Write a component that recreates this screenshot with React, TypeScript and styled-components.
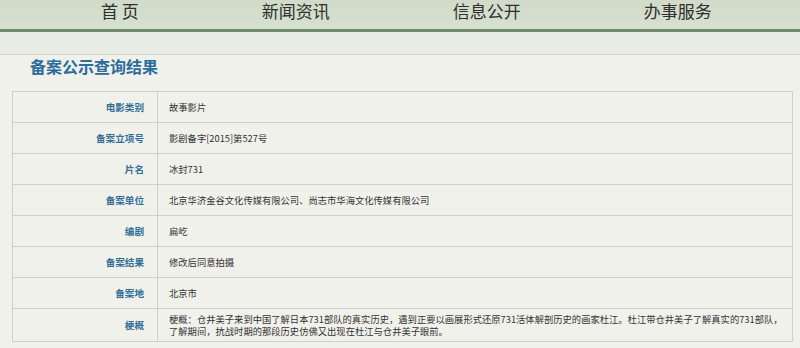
import styled, { createGlobalStyle } from "styled-components"

interface IRecord {
  label: string
  value: string
  tall?: boolean
}

const records: IRecord[] = [
  { label: "电影类别", value: "故事影片" },
  { label: "备案立项号", value: "影剧备字[2015]第527号" },
  { label: "片名", value: "冰封731" },
  {
    label: "备案单位",
    value: "北京华济金谷文化传媒有限公司、尚志市华海文化传媒有限公司",
  },
  { label: "编剧", value: "扁屹" },
  { label: "备案结果", value: "修改后同意拍摄" },
  { label: "备案地", value: "北京市" },
  {
    label: "梗概",
    value:
      "梗概：仓井美子来到中国了解日本731部队的真实历史，遇到正要以画展形式还原731活体解剖历史的画家杜江。杜江带仓井美子了解真实的731部队，了解期间，抗战时期的那段历史仿佛又出现在杜江与仓井美子眼前。",
    tall: true,
  },
]

const navItems = ["首 页", "新闻资讯", "信息公开", "办事服务"]

const GlobalStyle = createGlobalStyle`
  html, body {
    margin: 0;
    padding: 0;
    background: #eceee7;
  }
  body {
    font-family: "Noto Sans CJK SC", "Noto Sans", sans-serif;
  }
  #root {
    width: 800px;
    height: 348px;
    overflow: hidden;
  }
`

const Page = styled.div`
  width: 800px;
  height: 348px;
  display: flex;
  flex-direction: column;
`

const Nav = styled.nav`
  height: 29px;
  display: flex;
  align-items: flex-start;
  gap: 123px;
  padding-left: 101px;
  background: linear-gradient(to bottom, #d1dbc9, #d8e1d1);
  border-bottom: 3px solid #6e8a6b;
`

const NavItem = styled.a`
  font-size: 17px;
  line-height: 17px;
  padding-top: 2px;
  color: #2f2f2f;
  text-decoration: none;
  white-space: pre;
`

const Band = styled.div`
  height: 22px;
  background: #e9ece5;
  border-bottom: 1px solid #d2d5cd;
`

const Panel = styled.section`
  flex: 1;
  padding: 0 7px 0 12px;
  background: #f1f1ec;
`

const Title = styled.h2`
  margin: 0 0 17px;
  padding: 3px 0 0 18px;
  font-size: 16px;
  line-height: 16px;
  font-weight: 700;
  color: #2a6c9a;
`

const Table = styled.table`
  width: 100%;
  border-collapse: collapse;
  border: 1px solid #cfd1c9;
  font-size: 9.3px;
`

const Row = styled.tr<{ $tall?: boolean }>`
  height: ${p => (p.$tall ? 33 : 31)}px;
`

const Label = styled.th`
  width: 131px;
  padding: 0 13px 0 0;
  border: 1px solid #cfd1c9;
  text-align: right;
  font-size: 9.6px;
  font-weight: 700;
  color: #336f97;
`

const Value = styled.td<{ $tall?: boolean }>`
  padding: ${p => (p.$tall ? "4px 1px 4px 11px" : "0 1px 0 11px")};
  border: 1px solid #cfd1c9;
  color: #333;
  line-height: ${p => (p.$tall ? "12px" : "normal")};
`

export default function App() {
  return (
    <Page>
      <GlobalStyle />
      <Nav>
        {navItems.map(item => (
          <NavItem key={item} href="#">
            {item}
          </NavItem>
        ))}
      </Nav>
      <Band />
      <Panel>
        <Title>备案公示查询结果</Title>
        <Table>
          <tbody>
            {records.map(r => (
              <Row key={r.label} $tall={r.tall}>
                <Label>{r.label}</Label>
                <Value $tall={r.tall}>{r.value}</Value>
              </Row>
            ))}
          </tbody>
        </Table>
      </Panel>
    </Page>
  )
}
